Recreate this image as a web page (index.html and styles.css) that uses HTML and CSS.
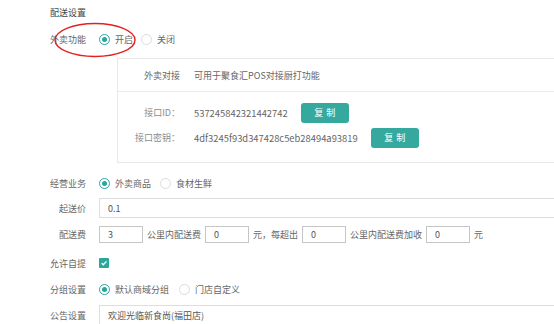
FILE: index.html
```html
<!DOCTYPE html>
<html lang="zh">
<head>
<meta charset="utf-8">
<link rel="stylesheet" href="styles.css">
</head>
<body>
<div class="page">
  <div class="title">配送设置</div>
  <div class="row r-func">
    <span class="label">外卖功能</span>
    <span class="radio on"></span><span class="opt">开启</span>
    <span class="radio"></span><span class="opt">关闭</span>
  </div>
  <svg class="mark" width="90" height="40" viewBox="0 0 90 40"><ellipse cx="41" cy="18" rx="40" ry="16.5" fill="none" stroke="#e3201f" stroke-width="1.4"/></svg>

  <div class="panel">
    <div class="p-head">
      <span class="p-label">外卖对接</span>
      <span class="p-value">可用于聚食汇POS对接厨打功能</span>
    </div>
    <div class="p-body">
      <div class="p-row">
        <span class="p-label light">接口ID：</span>
        <span class="p-value num">537245842321442742</span>
        <span class="btn">复制</span>
      </div>
      <div class="p-row">
        <span class="p-label light">接口密钥：</span>
        <span class="p-value num">4df3245f93d347428c5eb28494a93819</span>
        <span class="btn">复制</span>
      </div>
    </div>
  </div>

  <div class="row r-biz">
    <span class="label">经营业务</span>
    <span class="radio on"></span><span class="opt">外卖商品</span>
    <span class="radio"></span><span class="opt">食材生鲜</span>
  </div>
  <div class="row r-min">
    <span class="label">起送价</span>
    <div class="input wide">0.1</div>
  </div>
  <div class="row r-fee">
    <span class="label">配送费</span>
    <div class="input small">3</div>
    <span class="txt">公里内配送费</span>
    <div class="input small">0</div>
    <span class="txt">元，每超出</span>
    <div class="input small">0</div>
    <span class="txt">公里内配送费加收</span>
    <div class="input small">0</div>
    <span class="txt">元</span>
  </div>
  <div class="row r-self">
    <span class="label">允许自提</span>
    <span class="check"><svg width="10" height="10" viewBox="0 0 10 10"><path d="M2.6 5.2 L4.3 6.8 L7.5 3.4" fill="none" stroke="#fff" stroke-width="1.3"/></svg></span>
  </div>
  <div class="row r-group">
    <span class="label">分组设置</span>
    <span class="radio on"></span><span class="opt">默认商域分组</span>
    <span class="radio"></span><span class="opt">门店自定义</span>
  </div>
  <div class="row r-notice">
    <span class="label">公告设置</span>
    <div class="input wide">欢迎光临新食尚(福田店)</div>
  </div>
</div>
</body>
</html>
```

FILE: styles.css
```css
html, body {
  margin: 0;
  padding: 0;
  background: #fff;
  overflow: hidden;
}
.page {
  position: relative;
  padding-left: 50px;
  font-family: "Noto Sans CJK SC", "Microsoft YaHei", sans-serif;
  font-size: 9px;
  color: #666;
}
.title {
  height: 26px;
  line-height: 26px;
  color: #444;
}
.row {
  display: flex;
  align-items: center;
  height: 26px;
  white-space: nowrap;
}
.label {
  width: 36px;
  text-align: right;
  margin-right: 13px;
  flex: none;
  color: #666;
}
.radio {
  width: 11px;
  height: 11px;
  box-sizing: border-box;
  border: 1px solid #dcdcdc;
  border-radius: 50%;
  margin-right: 5px;
  flex: none;
  display: flex;
  align-items: center;
  justify-content: center;
}
.radio.on {
  border-color: #2aa79b;
}
.radio.on::after {
  content: "";
  width: 5px;
  height: 5px;
  border-radius: 50%;
  background: #2aa79b;
}
.opt {
  margin-right: 9px;
  color: #666;
}
.r-func .opt { margin-right: 8px; }
.r-group .opt { margin-right: 10px; }
.mark {
  position: absolute;
  left: 54px;
  top: 22px;
}
.panel {
  margin: 6px 0 0 67px;
  border: 1px solid #e8e8e8;
  border-right: none;
}
.p-head {
  display: flex;
  align-items: center;
  height: 32px;
  border-bottom: 1px solid #ececec;
}
.p-body {
  padding: 8px 0 12px;
}
.p-row {
  display: flex;
  align-items: center;
  height: 25px;
}
.p-label {
  width: 62px;
  text-align: right;
  flex: none;
  color: #666;
}
.p-label.light {
  color: #8c8c8c;
}
.p-value {
  margin-left: 14px;
  color: #666;
}
.num {
  font-size: 9.4px;
}
.btn {
  margin-left: 13px;
  width: 48px;
  height: 20px;
  border-radius: 3px;
  background: #35a99e;
  color: #fff;
  letter-spacing: 3px;
  text-indent: 3px;
  display: flex;
  align-items: center;
  justify-content: center;
}
.r-biz {
  margin-top: 7px;
}
.r-min {
  height: 24px;
}
.input {
  box-sizing: border-box;
  height: 20px;
  border: 1px solid #dedede;
  padding-left: 8px;
  display: flex;
  align-items: center;
  color: #555;
}
.input.wide {
  flex: 1;
  border-right: none;
}
.input.small {
  width: 44px;
  height: 17px;
  border-color: #c6c6c6;
}
.r-fee {
  height: 29px;
}
.txt {
  margin: 0 4px;
  color: #666;
}
.r-self {
  height: 28px;
}
.check {
  width: 10px;
  height: 10px;
  background: #2aa79b;
  border-radius: 1px;
  display: flex;
}
.r-group {
  height: 24px;
}
.r-notice {
  height: 28px;
}
```
